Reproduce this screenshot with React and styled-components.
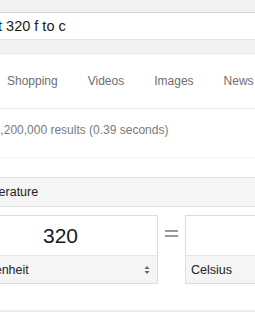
import React from "react";
import styled, { createGlobalStyle } from "styled-components";

const GlobalStyle = createGlobalStyle`
  html, body {
    margin: 0;
    padding: 0;
    background: #ffffff;
  }
  body {
    font-family: "Liberation Sans", Arial, sans-serif;
    width: 255px;
    height: 333px;
    overflow: hidden;
  }
`;

const Page = styled.div`
  width: 255px;
  height: 333px;
  overflow: hidden;
  display: flex;
  flex-direction: column;
`;

const TopBand = styled.div`
  height: 12px;
  background: #f1f1f1;
  border-bottom: 1px solid #d4d4d4;
`;

const SearchBox = styled.div`
  height: 26px;
  background: #fff;
  border-bottom: 1px solid #e2e2e2;
  display: flex;
  align-items: center;
`;

const SearchText = styled.div`
  font-size: 14.5px;
  color: #1a1a1a;
  white-space: nowrap;
  text-indent: ${(p) => p.$indent}px;
`;

const GrayBand = styled.div`
  height: 13px;
  background: #f2f2f2;
  border-bottom: 1px solid #e9e9e9;
`;

const Tabs = styled.div`
  height: 54px;
  display: flex;
  align-items: center;
  gap: 30px;
  padding-left: 7px;
  border-bottom: 1px solid #ebebeb;
  white-space: nowrap;
`;

const Tab = styled.span`
  font-size: 12px;
  color: #6e6e6e;
`;

const Results = styled.div`
  height: 49px;
  display: flex;
  align-items: center;
  padding-bottom: 6px;
  box-sizing: border-box;
  border-bottom: 1px solid #f3f3f3;
`;

const ResultsText = styled.div`
  font-size: 12px;
  color: #7a7a7a;
  white-space: nowrap;
  text-indent: ${(p) => p.$indent}px;
`;

const Card = styled.div`
  margin-top: 19px;
  height: 133px;
  border-bottom: 2px solid #ececec;
  display: flex;
  flex-direction: column;
`;

const CardHeader = styled.div`
  height: 28px;
  background: #f5f5f5;
  border-top: 1px solid #e4e4e4;
  border-bottom: 1px solid #e4e4e4;
  display: flex;
  align-items: center;
`;

const HeaderLabel = styled.div`
  font-size: 12.5px;
  color: #222;
  white-space: nowrap;
  text-indent: ${(p) => p.$indent}px;
`;

const Converter = styled.div`
  display: flex;
  margin-top: 8px;
  margin-left: -37px;
`;

const UnitBox = styled.div`
  flex: 0 0 195px;
  height: 69px;
  border: 1px solid #dcdcdc;
  box-sizing: border-box;
  display: flex;
  flex-direction: column;
`;

const ValueField = styled.div`
  height: 39px;
  background: #fff;
  display: flex;
  align-items: center;
  justify-content: center;
  font-size: 21px;
  color: #1a1a1a;
`;

const UnitSelect = styled.div`
  flex: 1;
  background: #f5f5f5;
  border-top: 1px solid #e6e6e6;
  display: flex;
  align-items: center;
  justify-content: space-between;
  padding: 0 6px 0 5px;
  font-size: 12.5px;
  color: #222;
`;

const Arrows = styled.svg`
  width: 6px;
  height: 10px;
  margin-right: 1px;
`;

const Equals = styled.div`
  flex: 0 0 27px;
  display: flex;
  justify-content: center;
  padding-top: 14px;
  box-sizing: border-box;
`;

const EqualsGlyph = styled.svg`
  width: 13px;
  height: 9px;
`;

const App = () => (
  <>
    <GlobalStyle />
    <Page>
      <TopBand />
      <SearchBox>
        <SearchText $indent={-45.5}>convert 320 f to c</SearchText>
      </SearchBox>
      <GrayBand />
      <Tabs>
        <Tab>Shopping</Tab>
        <Tab>Videos</Tab>
        <Tab>Images</Tab>
        <Tab>News</Tab>
      </Tabs>
      <Results>
        <ResultsText $indent={-41}>
          About 1,200,000 results (0.39 seconds)
        </ResultsText>
      </Results>
      <Card>
        <CardHeader>
          <HeaderLabel $indent={-32}>Temperature</HeaderLabel>
        </CardHeader>
        <Converter>
          <UnitBox>
            <ValueField>320</ValueField>
            <UnitSelect>
              <span>Fahrenheit</span>
              <Arrows viewBox="0 0 6 10">
                <path d="M0.5 4 L3 1 L5.5 4 Z M0.5 6 L3 9 L5.5 6 Z" fill="#666" />
              </Arrows>
            </UnitSelect>
          </UnitBox>
          <Equals>
            <EqualsGlyph viewBox="0 0 13 9">
              <rect x="0" y="1" width="13" height="2" fill="#999" />
              <rect x="0" y="6" width="13" height="2" fill="#999" />
            </EqualsGlyph>
          </Equals>
          <UnitBox>
            <ValueField>160</ValueField>
            <UnitSelect>
              <span>Celsius</span>
            </UnitSelect>
          </UnitBox>
        </Converter>
      </Card>
    </Page>
  </>
);

export default App;
